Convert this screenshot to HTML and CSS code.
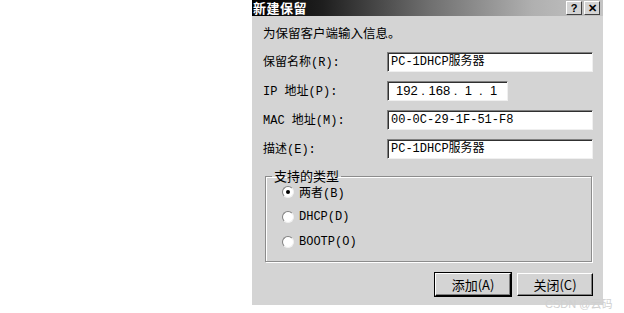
FILE: index.html
```html
<!DOCTYPE html>
<html lang="zh-CN">
<head>
    <meta charset="UTF-8">
    <title>新建保留</title>
    <link rel="stylesheet" href="styles.css">
</head>
<body>
    <div class="dialog">
        <!-- Title bar -->
        <div class="titlebar">
            <span class="title">新建保留</span>
            <div class="title-btns">
                <span class="ctrl-btn">?</span>
                <span class="ctrl-btn">✕</span>
            </div>
        </div>

        <div class="content">
            <p class="intro">为保留客户端输入信息。</p>

            <div class="form">
                <label class="label">保留名称(R):</label>
                <div class="field">PC-1DHCP服务器</div>

                <label class="label">IP 地址(P):</label>
                <div class="field field-ip">192 . 168 .&nbsp; 1&nbsp; .&nbsp; 1</div>

                <label class="label">MAC 地址(M):</label>
                <div class="field">00-0C-29-1F-51-F8</div>

                <label class="label">描述(E):</label>
                <div class="field">PC-1DHCP服务器</div>
            </div>

            <fieldset class="group">
                <legend>支持的类型</legend>
                <div class="radio-list">
                    <div class="radio-row"><span class="radio checked"></span>两者(B)</div>
                    <div class="radio-row"><span class="radio"></span>DHCP(D)</div>
                    <div class="radio-row"><span class="radio"></span>BOOTP(O)</div>
                </div>
            </fieldset>

            <div class="buttons">
                <button class="btn btn-default">添加(A)</button>
                <button class="btn">关闭(C)</button>
            </div>
        </div>
    </div>

    <div class="watermark">CSDN @云码</div>
</body>
</html>
```

FILE: styles.css
```css
/* Page */
body {
    margin: 0;
    background-color: #fff;
    font-family: "Liberation Mono", "Noto Sans CJK SC", monospace;
    font-size: 12px;
    color: #000;
}

/* Dialog window */
.dialog {
    margin-left: 252px;
    width: 351px;
    height: 305px;
    background-color: #d4d4d4;
    display: flex;
    flex-direction: column;
}

/* Title bar */
.titlebar {
    height: 16px;
    background: linear-gradient(to right, #000 0%, #1e1e1e 20%, #6e6e6e 50%, #b0b0b0 80%, #c4c4c4 100%);
    display: flex;
    align-items: center;
    justify-content: space-between;
    padding: 0 3px 0 1px;
}

.title {
    color: #fff;
    font-family: "Noto Sans CJK SC", sans-serif;
    font-weight: bold;
    font-size: 13px;
    line-height: 16px;
    letter-spacing: 0.5px;
}

.title-btns {
    display: flex;
    gap: 2px;
}

.ctrl-btn {
    width: 14px;
    height: 12px;
    background-color: #d4d4d4;
    border-top: 1px solid #fff;
    border-left: 1px solid #fff;
    border-right: 1px solid #404040;
    border-bottom: 1px solid #404040;
    font-family: "Liberation Sans", sans-serif;
    font-weight: bold;
    font-size: 11px;
    line-height: 12px;
    text-align: center;
}

/* Content */
.content {
    padding: 9px 10px 0 11px;
}

.intro {
    margin: 0;
    font-family: "Noto Sans CJK SC", sans-serif;
    font-size: 12.5px;
    line-height: 16px;
}

.form {
    display: grid;
    grid-template-columns: 124px 1fr;
    grid-auto-rows: 20px;
    row-gap: 9px;
    margin-top: 11px;
}

.label {
    display: flex;
    align-items: center;
    line-height: 20px;
    margin-top: 1px;
}

.field {
    background-color: #fff;
    border-top: 1px solid #808080;
    border-left: 1px solid #808080;
    border-right: 1px solid #f0f0f0;
    border-bottom: 1px solid #f0f0f0;
    box-shadow: inset 1px 1px 0 #303030;
    padding: 0 3px;
    line-height: 18px;
    white-space: nowrap;
}

.field-ip {
    width: 108px;
    font-family: "Liberation Sans", sans-serif;
    font-size: 13px;
    padding-left: 8px;
}

/* Group box */
.group {
    margin: 10px 0 0 2px;
    width: 327px;
    height: 93px;
    box-sizing: border-box;
    padding: 0 0 0 6px;
    border: 1px solid #8c8c8c;
    box-shadow: inset 1px 1px 0 #fff, 1px 1px 0 #fff;
}

.group legend {
    padding: 0 2px;
    font-family: "Noto Sans CJK SC", sans-serif;
    font-size: 13px;
    line-height: 14px;
}

.radio-list {
    margin: 1px 0 0 10px;
    display: flex;
    flex-direction: column;
    gap: 9px;
}

.radio-row {
    display: flex;
    align-items: center;
    gap: 5px;
    height: 16px;
}

.radio {
    width: 10px;
    height: 10px;
    border-radius: 50%;
    background-color: #fff;
    border: 1px solid #808080;
    border-right-color: #f0f0f0;
    border-bottom-color: #f0f0f0;
    position: relative;
}

.radio.checked::after {
    content: "";
    position: absolute;
    left: 3px;
    top: 3px;
    width: 4px;
    height: 4px;
    border-radius: 50%;
    background-color: #000;
}

/* Buttons */
.buttons {
    display: flex;
    justify-content: flex-end;
    gap: 6px;
    margin-top: 11px;
}

.btn {
    width: 76px;
    height: 23px;
    background-color: #d4d4d4;
    border-top: 1px solid #fff;
    border-left: 1px solid #fff;
    border-right: 1px solid #000;
    border-bottom: 1px solid #000;
    box-shadow: inset -1px -1px 0 #808080;
    font-family: "Noto Sans CJK SC", sans-serif;
    font-size: 13px;
    padding: 0;
    color: #000;
}

.btn-default {
    outline: 1px solid #000;
}

/* Watermark */
.watermark {
    position: absolute;
    left: 545px;
    top: 295px;
    color: #d0d0d0;
    font-family: "Liberation Sans", "Noto Sans CJK SC", sans-serif;
    font-size: 11px;
}
```
